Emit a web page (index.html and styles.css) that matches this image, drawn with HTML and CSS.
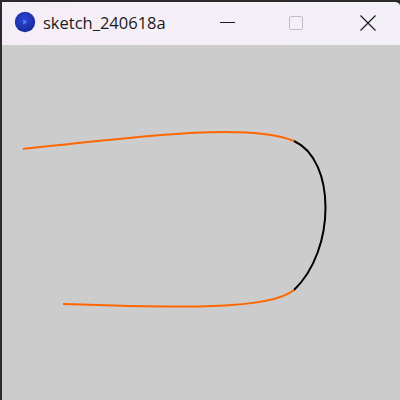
FILE: index.html
```html
<!DOCTYPE html>
<html>
<head>
<meta charset="utf-8">
<link rel="stylesheet" href="styles.css">
</head>
<body>
<div class="window">
  <div class="titlebar">
    <div class="app-icon">
      <svg width="22" height="22" viewBox="0 0 22 22">
        <defs>
          <radialGradient id="g" cx="0.45" cy="0.4" r="0.6">
            <stop offset="0" stop-color="#2b46d6"/>
            <stop offset="1" stop-color="#1a2a9c"/>
          </radialGradient>
        </defs>
        <circle cx="11" cy="11" r="10.2" fill="url(#g)"/>
        <path d="M9.3 8.6 L13.2 11 L9.3 13.4 Z" fill="#4f86f0"/>
      </svg>
    </div>
    <div class="title">sketch_240618a</div>
    <div class="spacer"></div>
    <div class="btn btn-min"><span class="min-line"></span></div>
    <div class="btn btn-max"><span class="max-box"></span></div>
    <div class="btn btn-close">
      <svg width="16" height="16" viewBox="0 0 16 16">
        <path d="M0.5 0.5 L15.5 15.5 M15.5 0.5 L0.5 15.5" stroke="#1b1b1b" stroke-width="1.2" fill="none"/>
      </svg>
    </div>
  </div>
  <div class="canvas">
    <svg width="398" height="355" viewBox="2 45 398 355">
      <path d="M23 149 C150 135 250 123 294 141" stroke="#ff6600" stroke-width="2" fill="none"/>
      <path d="M294 141 C336 160 336 250 294 290" stroke="#000000" stroke-width="2" fill="none"/>
      <path d="M294 290 C270 310 180 308 63 304" stroke="#ff6600" stroke-width="2" fill="none"/>
    </svg>
  </div>
</div>
</body>
</html>
```

FILE: styles.css
```css
html, body {
  margin: 0;
  padding: 0;
  background: #2b2b2b;
}
.window {
  width: 398px;
  height: 398px;
  border-top: 2px solid #2b2b2b;
  border-left: 2px solid #2b2b2b;
  border-top-right-radius: 6px;
  display: flex;
  flex-direction: column;
  overflow: hidden;
  background: #cccccc;
}
.titlebar {
  height: 43px;
  display: flex;
  align-items: center;
  background: linear-gradient(to right, #f6eef7, #f3f0f8);
  flex: none;
}
.app-icon {
  width: 22px;
  height: 22px;
  margin-left: 12px;
  margin-top: -3px;
  display: flex;
}
.title {
  margin-left: 7px;
  margin-top: -3px;
  font-family: "Open Sans", "Noto Sans", sans-serif;
  font-size: 16.5px;
  color: #1a1a1a;
}
.spacer {
  flex: 1;
}
.btn {
  height: 43px;
  display: flex;
  align-items: center;
  justify-content: center;
}
.btn-min {
  width: 67px;
}
.min-line {
  width: 15px;
  height: 1px;
  background: #1b1b1b;
  margin-top: -2px;
}
.btn-max {
  width: 70px;
}
.max-box {
  width: 12px;
  height: 12px;
  border: 1px solid #c2bec6;
  border-radius: 2px;
  margin-top: -1px;
}
.btn-close {
  width: 69px;
  padding-left: 4px;
  box-sizing: border-box;
}
.btn-close svg {
  margin-top: -1px;
}
.canvas {
  flex: 1;
  background: #cccccc;
  display: flex;
}
.canvas svg {
  display: block;
}
```
